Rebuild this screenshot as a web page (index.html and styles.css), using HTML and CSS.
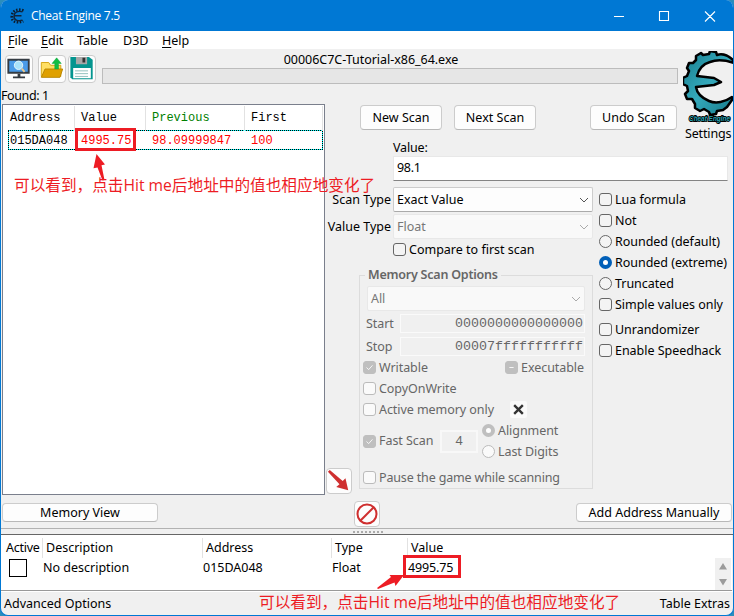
FILE: index.html
```html
<!DOCTYPE html>
<html lang="en">
<head>
<meta charset="utf-8">
<title>Cheat Engine 7.5</title>
<link rel="stylesheet" href="styles.css">
</head>
<body>
<div class="window">
  <header class="titlebar">
    <svg class="app-icon" viewBox="0 0 16 16"><path d="M14.500 2.500C9 .5 3.500 2 2.800 8s5 7.500 11.500 5.200" fill="none" stroke="#0c1c2c" stroke-width="2.600" stroke-dasharray="1.500 1.500"/><path d="M13.500 3.800C9 2.500 5.500 4 5 8s4 5.500 8.500 4.200M5 7.800h7.500" fill="none" stroke="#10243a" stroke-width="1.400"/></svg>
    <span class="app-title">Cheat Engine 7.5</span>
    <svg class="captions" viewBox="0 0 110 14"><path d="M3 7.500h10M48.500 2.500h9v9h-9zM94 2.500l10 10M104 2.500l-10 10" fill="none" stroke="#fff" stroke-width="1.100"/></svg>
  </header>
  <nav class="menubar">
    <span class="m-file"><u>F</u>ile</span><span class="m-edit"><u>E</u>dit</span><span class="m-table">Table</span><span class="m-d3d">D3D</span><span class="m-help"><u>H</u>elp</span>
  </nav>

  <div class="upper">
    <div class="tools">
      <div class="tool"><svg viewBox="0 0 27 28"><path d="M1 3h24v16H1z" fill="#343b42"/><path d="M3 5h20v12H3z" fill="#4a9be8"/><path d="M12 19h3v3h-3zM7 22h13v2H7z" fill="#343b42"/><circle cx="13" cy="10" r="4.500" fill="#a9e2fa" stroke="#e9f7fb"/><path d="M16.500 13.500l3 3.500" stroke="#f0c98a" stroke-width="2"/></svg></div>
      <div class="tool"><svg viewBox="0 0 27 28"><path d="M2 7h8l2 3h11v12H2z" fill="#ffdf63" stroke="#d4a20e"/><path d="M6 14h19l-3 9H2z" fill="#dfa000" stroke="#b98500"/><path d="M16.500 14V8h-3L18.500 2l5 6h-3v6z" fill="#12bd43" stroke="#08a239" stroke-width=".5"/></svg></div>
      <div class="tool"><svg viewBox="0 0 27 28"><path d="M1 1h20l4 3v21H3l-2-2z" fill="#04958f"/><path d="M7 1h12v8H7z" fill="#a8a8a8"/><path d="M14 2h3v5h-3z" fill="#333"/><path d="M4 13h19v11H4z" fill="#fff"/><path d="M6 16h14M6 19h14M6 22h14" stroke="#8bbcb9"/></svg></div>
      <div class="process"><span class="process-name">00006C7C-Tutorial-x86_64.exe</span><div class="progress"></div></div>
    </div>

    <div class="brand">
      <svg class="logo" viewBox="0 0 51 75">
        <defs><linearGradient id="teal" x1="0" y1="0" x2="1" y2="1"><stop offset="0" stop-color="#167b8c"/><stop offset=".5" stop-color="#35a9bb"/><stop offset="1" stop-color="#147989"/></linearGradient></defs>
        <path d="M51 10C46 5 40 2 34 4l-1-3-6-1-1 3-6 1-2-2-5 3v4l-3 3-4 0-2 5 2 3-2 5-4 2v6l4 2 1 5-3 3 2 5 5 0 3 5 0 4 5 3 4-2 5 3 1 3 6-1 1-3 6-1 4-3 5-7v-3c-7 5-16 7-23 4-7-3-12-7-13-14l18-2 7-3-7-4-17-2c2-8 6-12 13-14 8-3 15-2 24 1z" fill="url(#teal)" stroke="#000" stroke-width="2.500" stroke-linejoin="round"/>
        <text x="6" y="70" class="logo-text" textLength="41" lengthAdjust="spacingAndGlyphs">Cheat Engine</text>
      </svg>
      <span class="settings">Settings</span>
    </div>

    <section class="results">
      <div class="found">Found: 1</div>
      <div class="list">
        <div class="list-head"><span>Address</span><span>Value</span><span class="green">Previous</span><span>First</span></div>
        <div class="list-row"><span>015DA048</span><span class="red">4995.75</span><span class="red">98.09999847</span><span class="red">100</span></div>
      </div>
    </section>

    <div class="scan-buttons"><button class="btn new">New Scan</button><button class="btn next">Next Scan</button><button class="btn undo">Undo Scan</button></div>

    <section class="form">
      <div class="value-label">Value:</div>
      <div class="value-input">98.1</div>
      <div class="form-cols">
        <div class="form-left">
          <div class="field"><label>Scan Type</label><div class="select">Exact Value<svg viewBox="0 0 10 6"><path d="M1 1l4 4 4-4"/></svg></div></div>
          <div class="field second"><label>Value Type</label><div class="select off">Float<svg viewBox="0 0 10 6"><path d="M1 1l4 4 4-4"/></svg></div></div>
          <div class="check compare"><i class="box"></i><span>Compare to first scan</span></div>
          <fieldset class="memory">
            <legend>Memory Scan Options</legend>
            <div class="select off all">All<svg viewBox="0 0 10 6"><path d="M1 1l4 4 4-4"/></svg></div>
            <div class="range"><span>Start</span><div class="hex">0000000000000000</div></div>
            <div class="range"><span>Stop</span><div class="hex">00007fffffffffff</div></div>
            <div class="split">
              <div class="check"><i class="box filled"><svg viewBox="0 0 13 13"><path d="M3 6.500l2.500 2.500 4.500-5"/></svg></i><span>Writable</span></div>
              <div class="check"><i class="box filled"><svg viewBox="0 0 13 13"><path d="M4 6.500h5"/></svg></i><span>Executable</span></div>
            </div>
            <div class="check"><i class="box"></i><span>CopyOnWrite</span></div>
            <div class="check"><i class="box"></i><span class="active-text">Active memory only</span><b class="clear"><svg viewBox="0 0 12 12"><path d="M2 2l8 8M10 2l-8 8" stroke="#333" stroke-width="2.200"/></svg></b></div>
            <div class="fast">
              <div class="check"><i class="box filled"><svg viewBox="0 0 13 13"><path d="M3 6.500l2.500 2.500 4.500-5"/></svg></i><span class="fast-text">Fast Scan</span></div>
              <div class="four">4</div>
              <div class="radios"><div class="check"><i class="box round graydot"></i><span>Alignment</span></div><div class="check"><i class="box round"></i><span>Last Digits</span></div></div>
            </div>
            <div class="check pause"><i class="box"></i><span>Pause the game while scanning</span></div>
          </fieldset>
        </div>
        <div class="options">
          <div class="check"><i class="box"></i><span>Lua formula</span></div>
          <div class="check"><i class="box"></i><span>Not</span></div>
          <div class="check"><i class="box round"></i><span>Rounded (default)</span></div>
          <div class="check"><i class="box round selected"></i><span>Rounded (extreme)</span></div>
          <div class="check"><i class="box round"></i><span>Truncated</span></div>
          <div class="check"><i class="box"></i><span>Simple values only</span></div>
          <div class="check gap"><i class="box"></i><span>Unrandomizer</span></div>
          <div class="check"><i class="box"></i><span>Enable Speedhack</span></div>
        </div>
      </div>
    </section>
    <div class="copy-down"><svg viewBox="0 0 26 26"><path d="M1 3L3 1 17 13l3-3 3 13L10 19.500l3.500-3z" fill="#cf2f2f"/></svg></div>
  </div>

  <div class="actions">
    <button class="btn view">Memory View</button>
    <div class="ban"><svg viewBox="0 0 26 26"><circle cx="13" cy="13" r="10.300" fill="none" stroke="#cf2f2f" stroke-width="2.200"/><path d="M6 20L20 6" stroke="#cf2f2f" stroke-width="2.200"/></svg></div>
    <button class="btn add">Add Address Manually</button>
  </div>
  <div class="splitter"><i></i></div>
  <section class="table">
    <div class="table-head"><span>Active</span><span>Description</span><span>Address</span><span>Type</span><span>Value</span></div>
    <div class="table-row"><i></i><span>No description</span><span>015DA048</span><span>Float</span><span class="num">4995.75</span></div>
    <div class="scroll"><svg viewBox="0 0 16 32"><path d="M4 11.500L8 5l4 6.500zM4 21h8l-4 6.500z" fill="#9b9b9b"/></svg></div>
  </section>
  <footer class="status"><span>Advanced Options</span><span>Table Extras</span></footer>

  <div class="mark mark-top"></div>
  <div class="mark mark-bottom"></div>
  <svg class="arrows" viewBox="0 0 734 616"><path d="M95.500 154l8.500 10.500-3.500.8L103.500 180l-2 .5-5-13-4 .8z" fill="#ed1c24"/><path d="M403 575l-8.500 11-1-3.500L377 589l-1-1 14-11-1.500-2z" fill="#ed1c24"/></svg>
  <div class="note note-top">可以看到，点击Hit me后地址中的值也相应地变化了</div>
  <div class="note note-bottom">可以看到，点击Hit me后地址中的值也相应地变化了</div>
</div>
</body>
</html>
```

FILE: styles.css
```css
* { box-sizing: border-box; }
body { margin: 0; background: #2b8dbb; font: 12.5px/18px "Noto Sans", "Noto Sans CJK SC", sans-serif; color: #000; }
i { font-style: normal; }
svg { display: block; }
.window { position: relative; width: 734px; height: 616px; overflow: hidden; display: flex; flex-direction: column; background: #f0f0f0; border: solid #0078d4; border-width: 0 1px 1px; border-radius: 8px; white-space: nowrap; }
.titlebar { height: 31px; flex: none; background: #0078d4; display: flex; align-items: center; padding-left: 8px; color: #fff; }
.app-icon { width: 16px; height: 16px; }
.app-title { margin-left: 6px; font: 12px/18px "Open Sans", sans-serif; letter-spacing: -.28px; }
.captions { width: 110px; height: 14px; margin: 0 12px 0 auto; }
.menubar { height: 18px; flex: none; background: #fff; display: flex; padding-left: 7px; line-height: 19px; }
.menubar u { text-underline-offset: 2px; }
.m-file { width: 33px; } .m-edit { width: 36px; } .m-table { width: 46px; } .m-d3d { width: 39px; }
.upper { height: 447px; flex: none; display: grid; grid-template-columns: 326px 352px 1fr; grid-template-rows: 39px 52px 1fr; position: relative; }
.tools { grid-column: 1 / 3; grid-row: 1; display: flex; padding: 6px 1px 0 4px; }
.tool { width: 28px; height: 28px; flex: none; border: 1px solid #ccc; border-radius: 4px; background: #fdfdfd; margin-right: 5px; }
.tool + .tool + .tool { margin-left: -3px; margin-right: 6px; }
.tool svg { width: 26px; height: 26px; }
.process { flex: 1; text-align: center; margin-top: -4px; }
.process-name { display: block; height: 17px; line-height: 17px; margin-left: -38px; letter-spacing: -.03px; }
.progress { height: 16px; background: #e6e6e6; border: 1px solid #bcbcbc; }
.brand { grid-column: 3; grid-row: 1 / 3; padding: 2px 0 0 4px; }
.logo { width: 51px; height: 75px; }
.logo-text { font: italic bold 8px "Liberation Sans", sans-serif; fill: #27a4b4; stroke: #000; stroke-width: 2px; paint-order: stroke; }
.settings { display: block; margin: -1px 0 0 2px; letter-spacing: -.15px; }
.results { grid-column: 1; grid-row: 2 / 4; padding-left: 1px; }
.found { height: 16px; line-height: 16px; letter-spacing: -.4px; margin-left: -1px; }
.list { width: 323px; height: 391px; background: #fff; border: 1px solid #7a7f8c; font: 12px/20px "Liberation Mono", monospace; }
.list-head, .list-row { display: grid; grid-template-columns: 72px 71px 99px 1fr; }
.list-head { height: 25px; padding: 1px 1px 0 0; line-height: 25px; }
.list-head span { padding-left: 6px; border-right: 1px solid #e2e2e2; }
.list-head span:first-child { padding-left: 7px; }
.list-row { height: 20px; margin: 0 1px 0 5px; border: 1px dotted #000; grid-template-columns: 71px 71px 99px 1fr; background: linear-gradient(#fff, #fff) padding-box, linear-gradient(#0ff, #0ff) border-box; }
.list-row span { padding-left: 1px; line-height: 20px; }
.green { color: #008000; } .red { color: #f00; }
.btn { font: inherit; color: #000; padding: 0; background: #fdfdfd; border: 1px solid #ccc; border-bottom-color: #b8b8b8; border-radius: 4px; height: 25px; line-height: 22px; }
.scan-buttons { grid-column: 2; grid-row: 2; display: flex; padding: 17px 2px 0 33px; }
.new { width: 82px; } .next { width: 82px; margin-left: 12px; } .undo { width: 87px; margin-left: auto; }
.form { grid-column: 2 / 4; grid-row: 3; min-width: 0; }
.value-label { margin-left: 66px; height: 16px; line-height: 16px; letter-spacing: -.15px; }
.value-input { margin: 0 6px 0 66px; height: 25px; padding-left: 3px; background: #fff; border: 1px solid #e8e8e8; border-bottom-color: #848484; line-height: 22px; letter-spacing: -.3px; }
.form-cols { display: flex; padding-top: 6px; }
.form-left { width: 266px; }
.field { display: flex; height: 25px; }
.field.second { margin-top: 2px; }
.field label { width: 66px; text-align: right; padding-right: 2px; line-height: 25px; }
.select { flex: 1; display: flex; align-items: center; justify-content: space-between; padding: 0 3px; border: 1px solid #ccc; border-bottom-color: #aaa; border-radius: 2px; background: #fdfdfd; }
.select svg { width: 10px; height: 6px; fill: none; stroke: #555; }
.select.off { color: #777; border-color: #e8e8e8; background: #f9f9f9; }
.select.off svg { stroke: #aaa; }
.check { display: flex; align-items: center; height: 21px; }
.check span { margin-left: 3px; }
.box { width: 13px; height: 13px; flex: none; border: 1px solid #666; border-radius: 3px; background: #f4f4f4; }
.box.round { border-radius: 50%; }
.box.selected { border: 4px solid #005fb8; background: #fff; }
.compare { margin: 0 0 0 66px; }
.memory { margin: 8px 0 0 32px; padding: 0 7px 0 3px; border: 1px solid #dcdcdc; width: 234px; height: 221px; color: #666; min-width: 0; letter-spacing: -.06px; }
.memory legend { height: 14px; line-height: 14px; font-weight: 600; padding: 0 3px; margin-left: 2px; letter-spacing: -.22px; }
.memory .box { border-color: #bbb; background: #fafafa; }
.memory .filled { background: #bfbfbf; border-color: #bfbfbf; }
.filled svg { width: 11px; height: 11px; fill: none; stroke: #fff; }
.memory .graydot { border: 4px solid #bfbfbf; background: #fff; }
.all { height: 25px; margin: 4px 0 1px 4px; }
.range { display: flex; height: 23px; align-items: center; padding-left: 3px; }
.range span { width: 34px; }
.hex { flex: 1; height: 19px; border: 1px solid #fafafa; text-align: right; padding-right: 1px; font: 13.33px/17px "Liberation Mono", monospace; letter-spacing: 0; }
.split { display: flex; justify-content: space-between; margin-top: -1px; }
.split .check:last-child { margin-right: 1px; }
.active-text { width: 123px; }
.clear { width: 17px; height: 17px; background: #fafafa; margin-left: 8px; padding: 2px; border-radius: 2px; }
.clear svg { width: 13px; height: 13px; }
.fast { display: flex; align-items: center; height: 42px; }
.fast-text { width: 54px; }
.four { width: 38px; height: 23px; margin: 0 4px 0 7px; border: 2px solid #f8f8f8; text-align: center; line-height: 18px; }
.pause { margin-top: 5px; letter-spacing: -.15px; }
.options { margin: 2px 0 0 6px; letter-spacing: -.03px; }
.options .gap { margin-top: 4px; }
.copy-down, .ban { width: 26px; height: 26px; border: 1px solid #ccc; border-radius: 4px; background: #fdfdfd; }
.copy-down { position: absolute; left: 325px; top: 419px; }
.copy-down svg, .ban svg { width: 24px; height: 24px; }
.actions { display: flex; height: 32px; flex: none; padding: 5px 1px 0; }
.actions .btn { height: 19px; line-height: 17px; margin-top: 2px; }
.view { width: 156px; } .add { width: 156px; margin-left: auto; }
.ban { margin-left: 196px; }
.splitter { flex: none; height: 7px; border-top: 1px solid #b2b2b2; border-bottom: 1px solid #666; padding: 2px 0 0 352px; }
.splitter i { display: block; width: 30px; height: 2px; background: repeating-linear-gradient(90deg, #aaa 0 2px, transparent 2px 4px); }
.table { position: relative; height: 56px; flex: none; background: #fff; border-bottom: 1px solid #999; margin: 0 1px 0 0; padding-top: 3px; }
.table-head, .table-row { display: grid; grid-template-columns: 42px 160px 129px 76px 1fr; }
.table-head { height: 20px; line-height: 20px; }
.table-head span { padding-left: 3px; border-right: 1px solid #e2e2e2; }
.table-head span:first-child { padding-left: 5px; letter-spacing: -.25px; } .table-head span:last-child { border: 0; }
.table-row { line-height: 20px; }
.table-row span { padding-left: 0; }
.table-row .num { letter-spacing: -.15px; }
.table-row i { width: 18px; height: 18px; border: 1px solid #000; margin: 1px 0 0 8px; }
.scroll { position: absolute; right: 1px; bottom: 0; width: 16px; height: 32px; background: #f0f0f0; }
.status { flex: 1; display: flex; justify-content: space-between; padding: 1px 3px 0; line-height: 21px; border-top: 1px solid #fff; }
.mark { position: absolute; border: 3px solid #ed1c24; }
.mark-top { left: 74px; top: 128px; width: 61px; height: 23px; }
.mark-bottom { left: 402px; top: 555px; width: 58px; height: 23px; }
.arrows { position: absolute; left: 0; top: 0; width: 734px; height: 616px; }
.note { position: absolute; color: #ed1c24; font: 15.65px/20px "Open Sans", "Noto Sans CJK SC", sans-serif; }
.note-top { left: 13px; top: 175px; }
.note-bottom { left: 258px; top: 592px; }
```
